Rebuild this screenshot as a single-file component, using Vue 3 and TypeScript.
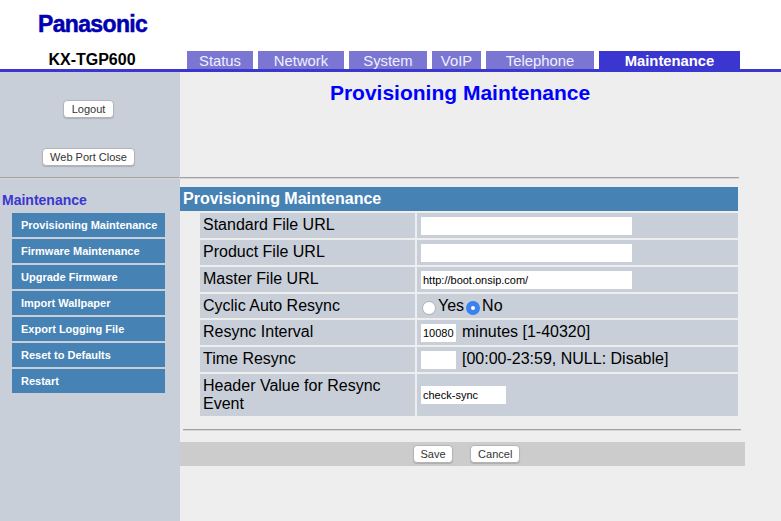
<script setup lang="ts">
const tabs = [
  { label: 'Status', width: 66 },
  { label: 'Network', width: 86 },
  { label: 'System', width: 78 },
  { label: 'VoIP', width: 49 },
  { label: 'Telephone', width: 108 },
  { label: 'Maintenance', width: 141, active: true },
]
const menu = [
  'Provisioning Maintenance',
  'Firmware Maintenance',
  'Upgrade Firmware',
  'Import Wallpaper',
  'Export Logging File',
  'Reset to Defaults',
  'Restart',
]
</script>

<template>
  <div class="page">
    <header class="header">
      <div class="logo">Panasonic</div>
      <div class="nav">
        <div class="model">KX-TGP600</div>
        <div class="tabs">
          <div
            v-for="t in tabs"
            :key="t.label"
            class="tab"
            :class="{ active: t.active }"
            :style="{ width: t.width + 'px' }"
          >{{ t.label }}</div>
        </div>
      </div>
    </header>

    <div class="body">
      <aside class="side">
        <div class="side-top">
          <button class="btn">Logout</button>
          <button class="btn">Web Port Close</button>
        </div>
        <div class="rule side-rule"></div>
        <div class="side-title">Maintenance</div>
        <nav class="menu">
          <a v-for="m in menu" :key="m" class="menu-item">{{ m }}</a>
        </nav>
      </aside>

      <main class="main">
        <h1 class="title">Provisioning Maintenance</h1>
        <div class="rule main-rule"></div>
        <h2 class="section">Provisioning Maintenance</h2>
        <div class="form">
          <div class="label">Standard File URL</div>
          <div class="value"><input class="inp wide" type="text" /></div>
          <div class="label">Product File URL</div>
          <div class="value"><input class="inp wide" type="text" /></div>
          <div class="label">Master File URL</div>
          <div class="value"><input class="inp wide" type="text" value="http://boot.onsip.com/" /></div>
          <div class="label short">Cyclic Auto Resync</div>
          <div class="value short radios">
            <input class="radio" type="radio" name="cyc" />
            <span class="yes">Yes</span>
            <input class="radio" type="radio" name="cyc" checked />
            <span>No</span>
          </div>
          <div class="label">Resync Interval</div>
          <div class="value"><input class="inp small" type="text" value="10080" /><span class="hint">minutes [1-40320]</span></div>
          <div class="label">Time Resync</div>
          <div class="value"><input class="inp small" type="text" /><span class="hint">[00:00-23:59, NULL: Disable]</span></div>
          <div class="label tall">Header Value for Resync Event</div>
          <div class="value tall"><input class="inp mid" type="text" value="check-sync" /></div>
        </div>
        <div class="rule bottom-rule"></div>
        <div class="actions">
          <button class="btn save">Save</button>
          <button class="btn cancel">Cancel</button>
        </div>
      </main>
    </div>
  </div>
</template>

<style>
html, body { margin: 0; background: #eeeeee; }
</style>

<style scoped>
.page {
  width: 781px;
  height: 521px;
  overflow: hidden;
  display: flex;
  flex-direction: column;
  font-family: "Liberation Sans", Arial, sans-serif;
  background: #eeeeee;
}
.header {
  height: 69px;
  background: #ffffff;
  border-bottom: 3px solid #3c36d0;
  display: flex;
  flex-direction: column;
  flex: none;
}
.logo {
  height: 51px;
  box-sizing: border-box;
  padding: 11px 0 0 38px;
  font-size: 23px;
  line-height: 27px;
  font-weight: 700;
  letter-spacing: -0.65px;
  color: #0000b0;
  -webkit-text-stroke: 0.5px #0000b0;
}
.nav { display: flex; height: 18px; }
.model {
  width: 184px;
  flex: none;
  text-align: center;
  font-size: 16px;
  line-height: 18px;
  font-weight: 700;
  color: #000000;
}
.tabs { margin-left: 3px; display: flex; gap: 5px; }
.tab {
  box-sizing: border-box;
  height: 18px;
  text-align: center;
  font-size: 14.8px;
  line-height: 20px;
  color: #f0f0ff;
  background: #7a76d2;
  white-space: nowrap;
}
.tab.active { background: #3c36d0; color: #ffffff; font-weight: 700; }

.body { display: flex; flex: 1; min-height: 0; }
.side {
  width: 180px;
  flex: none;
  background: #c8cfd9;
}
.side-top {
  height: 105px;
  box-sizing: border-box;
  padding: 28px 3px 0 0;
  display: flex;
  flex-direction: column;
  align-items: center;
  gap: 30px;
}
.btn {
  box-sizing: border-box;
  height: 18px;
  padding: 0 7.5px;
  font-family: "Liberation Sans", Arial, sans-serif;
  font-size: 11px;
  line-height: 16px;
  color: #333333;
  background: #ffffff;
  border: 1px solid #b4b4b4;
  border-radius: 4px;
  box-shadow: 0 1px 1px rgba(0, 0, 0, 0.15);
}
.save { padding: 0 6.5px; }
.cancel { padding: 0 7px; }
.rule { height: 1px; background: #a0a0a0; border-bottom: 1px solid #d8d8d8; }
.side-rule { width: 179px; }
.side-title {
  margin: 12px 0 0 2px;
  font-size: 14px;
  line-height: 18px;
  font-weight: 700;
  color: #3c36d0;
}
.menu {
  margin: 4px 0 0 12px;
  width: 153px;
  display: flex;
  flex-direction: column;
  gap: 2px;
}
.menu-item {
  height: 24px;
  box-sizing: border-box;
  padding-left: 9px;
  font-size: 11px;
  line-height: 24px;
  font-weight: 700;
  color: #ffffff;
  background: #4682b4;
  white-space: nowrap;
}

.main { flex: 1; min-width: 0; }
.title {
  margin: 0;
  width: 560px;
  height: 105px;
  box-sizing: border-box;
  padding-top: 9px;
  text-align: center;
  font-size: 21px;
  line-height: 24px;
  font-weight: 700;
  color: #0000ff;
}
.main-rule { width: 559px; }
.section {
  margin: 8px 0 0;
  width: 558px;
  height: 24px;
  box-sizing: border-box;
  padding-left: 3px;
  font-size: 16px;
  line-height: 24px;
  font-weight: 700;
  color: #ffffff;
  background: #4682b4;
}
.form {
  margin: 2px 0 0 20px;
  width: 538px;
  display: grid;
  grid-template-columns: 215px 321px;
  gap: 2px;
  font-size: 16px;
  color: #000000;
}
.label, .value {
  min-height: 25px;
  background: #c8cfd9;
  display: flex;
  align-items: center;
  box-sizing: border-box;
}
.label { padding-left: 3px; line-height: 18px; padding-bottom: 2px; }
.value { padding-left: 4px; }
.short { min-height: 24px; }
.tall { min-height: 42px; }
.label.short { padding-bottom: 0; }
.label.tall { padding-bottom: 1px; }
.inp {
  box-sizing: border-box;
  height: 18px;
  padding: 0 2px;
  border: 0;
  background: #ffffff;
  font-family: "Liberation Sans", Arial, sans-serif;
  font-size: 11px;
  color: #000000;
  outline: none;
}
.wide { width: 211px; }
.small { width: 35px; }
.mid { width: 85px; }
.hint { margin-left: 6px; padding-bottom: 2px; }
.radios { padding-left: 5px; }
.radio {
  appearance: none;
  -webkit-appearance: none;
  box-sizing: border-box;
  width: 14px;
  height: 14px;
  margin: 3px 2px 0 0;
  border-radius: 50%;
  background: #ffffff;
  border: 1px solid #b0b0b0;
  flex: none;
}
.radio:checked {
  border: 5px solid #3b82f0;
  background: #ffffff;
}
.yes { margin-right: 2px; }
.bottom-rule { margin: 13px 0 0 3px; width: 558px; }
.actions {
  margin-top: 11px;
  width: 565px;
  height: 24px;
  background: #cccccc;
  display: flex;
  align-items: center;
  padding-left: 233px;
  box-sizing: border-box;
  gap: 17px;
}
</style>
